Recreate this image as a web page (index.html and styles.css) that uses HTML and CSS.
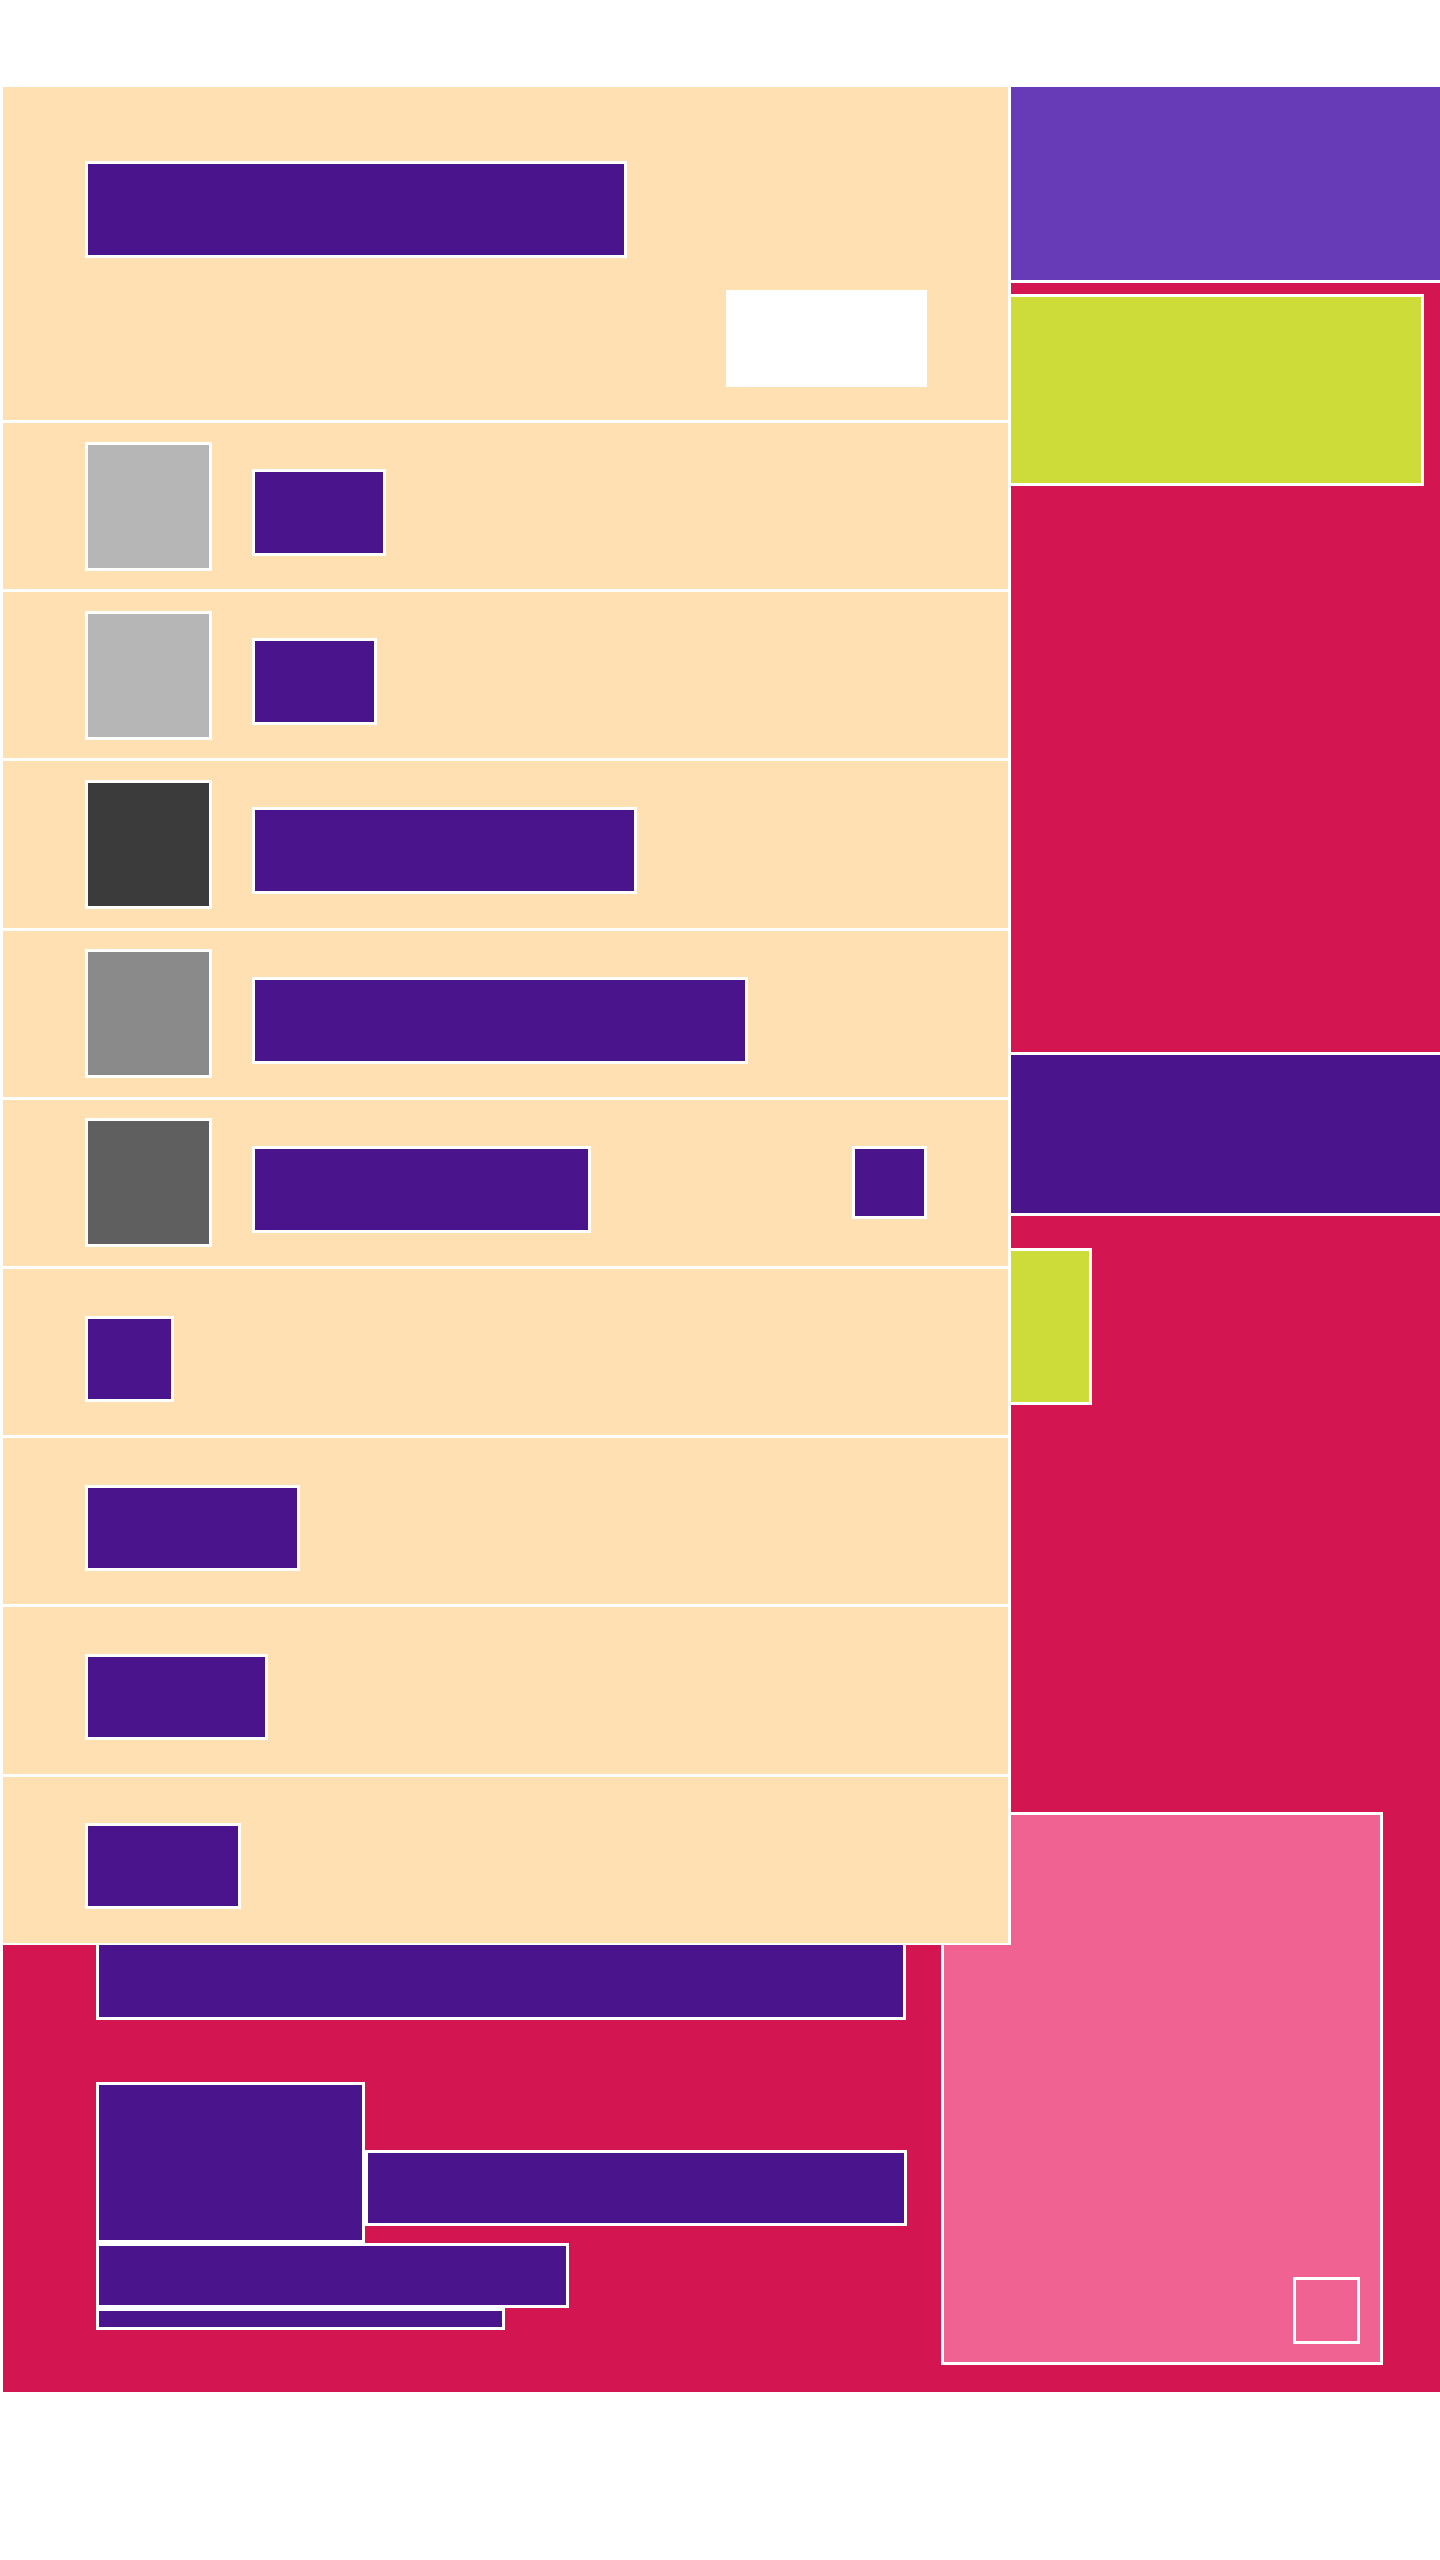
FILE: index.html
```html
<!DOCTYPE html>
<html>
<head>
    <meta charset="UTF-8">
    <meta name="viewport" content="width=device-width, initial-scale=1.0">
    <title>Drawer</title>
    <link rel="stylesheet" href="styles.css">
</head>
<body>
    <div class="app">
        <!-- main screen under the drawer -->
        <div class="topbar"></div>
        <div class="card-lime wide"></div>
        <div class="band"></div>
        <div class="card-lime narrow"></div>
        <div class="lower">
            <div class="feed">
                <div class="box bar-title"></div>
                <div class="media">
                    <div class="box media-pic"></div>
                    <div class="box media-text"></div>
                </div>
                <div class="box bar-sub"></div>
                <div class="box bar-meta"></div>
            </div>
            <div class="side-card">
                <div class="side-icon"></div>
            </div>
        </div>

        <!-- navigation drawer -->
        <div class="drawer">
            <div class="drawer-head">
                <div class="box head-title"></div>
                <div class="head-btn"></div>
            </div>
            <div class="row"><div class="thumb light"></div><div class="box label" style="width:134px"></div></div>
            <div class="row"><div class="thumb light"></div><div class="box label" style="width:125px"></div></div>
            <div class="row"><div class="thumb dark"></div><div class="box label" style="width:385px"></div></div>
            <div class="row"><div class="thumb mid"></div><div class="box label" style="width:496px"></div></div>
            <div class="row"><div class="thumb dim"></div><div class="box label" style="width:339px"></div><div class="box badge"></div></div>
            <div class="row"><div class="box label solo" style="width:89px"></div></div>
            <div class="row"><div class="box label solo" style="width:215px"></div></div>
            <div class="row"><div class="box label solo" style="width:183px"></div></div>
            <div class="row"><div class="box label solo" style="width:156px"></div></div>
        </div>
    </div>
</body>
</html>
```

FILE: styles.css
```css
* { box-sizing: border-box; }
body {
    margin: 0;
    background: #fff;
    font-family: "Liberation Sans", Arial, sans-serif;
}
.app {
    position: relative;
    margin: 87px 0 0 3px;
    width: 1437px;
    background: #d31551;
    padding-bottom: 27px;
}
.box {
    background: #4a148c;
    border: 3px solid #fff;
}

/* main screen */
.topbar {
    height: 196px;
    background: #673ab7;
    border-bottom: 3px solid #fff;
}
.card-lime {
    background: #cddc39;
    border: 3px solid #fff;
}
.card-lime.wide { margin: 11px 16px 0 16px; height: 192px; }
.card-lime.narrow { margin: 32px 0 0 16px; width: 1073px; height: 157px; }
.band {
    margin-top: 566px;
    height: 164px;
    background: #4a148c;
    border-top: 3px solid #fff;
    border-bottom: 3px solid #fff;
}
.lower {
    display: flex;
    align-items: flex-start;
    margin-top: 407px;
    padding: 0 57px 0 93px;
}
.feed {
    width: 811px;
    margin-right: 34px;
    display: flex;
    flex-direction: column;
    align-items: flex-start;
}
.bar-title { margin-top: 58px; width: 810px; height: 150px; }
.media { display: flex; margin-top: 62px; }
.media-pic { width: 269px; height: 161px; }
.media-text { width: 542px; height: 76px; margin-top: 68px; }
.bar-sub { width: 473px; height: 65px; }
.bar-meta { width: 409px; height: 22px; }
.side-card {
    width: 442px;
    height: 553px;
    background: #f06292;
    border: 3px solid #fff;
    display: flex;
    align-items: flex-end;
    justify-content: flex-end;
    padding: 0 20px 18px 0;
}
.side-icon {
    width: 67px;
    height: 67px;
    border: 3px solid #fff;
}

/* drawer */
.drawer {
    position: absolute;
    top: 0;
    left: 0;
    width: 1008px;
    background: #fff;
    border-right: 3px solid #fff;
    border-bottom: 2px solid #fff;
    display: flex;
    flex-direction: column;
    gap: 3px;
}
.drawer-head {
    height: 333px;
    background: #ffe0b2;
    padding: 74px 81px 0 82px;
    display: flex;
    flex-direction: column;
}
.head-title { width: 542px; height: 97px; }
.head-btn {
    align-self: flex-end;
    margin-top: 32px;
    width: 201px;
    height: 97px;
    background: #fff;
}
.row {
    height: 166.2px;
    background: #ffe0b2;
    display: flex;
    align-items: center;
    padding: 0 81px 0 82px;
}
.thumb {
    width: 127px;
    height: 129px;
    border: 3px solid #fff;
    margin-right: 40px;
}
.thumb.light { background: #b6b6b6; }
.thumb.dark { background: #3b3b3b; }
.thumb.mid { background: #8a8a8a; }
.thumb.dim { background: #5f5f5f; }
.label { height: 87px; margin-top: 13px; }
.label.solo { height: 86px; }
.badge { margin-left: auto; width: 75px; height: 73px; }
```
